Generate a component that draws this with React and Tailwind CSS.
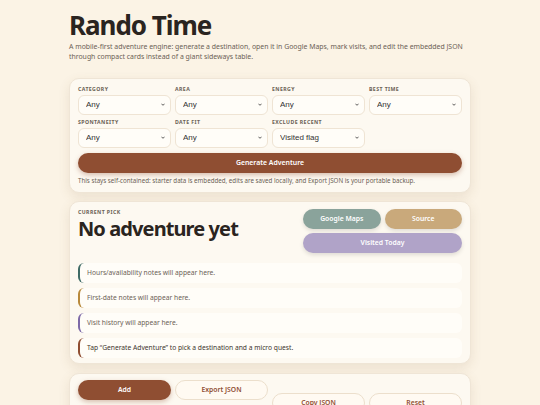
import React from "react";

const filters = [
  { label: "Category", value: "Any" },
  { label: "Area", value: "Any" },
  { label: "Energy", value: "Any" },
  { label: "Best Time", value: "Any" },
  { label: "Spontaneity", value: "Any" },
  { label: "Date Fit", value: "Any" },
  { label: "Exclude Recent", value: "Visited flag" },
];

const notes = [
  { text: "Hours/availability notes will appear here.", border: "border-[#3f6b66]", color: "text-[#6b6155]" },
  { text: "First-date notes will appear here.", border: "border-[#b8893c]", color: "text-[#6b6155]" },
  { text: "Visit history will appear here.", border: "border-[#7d6aa8]", color: "text-[#6b6155]" },
  { text: "Tap “Generate Adventure” to pick a destination and a micro quest.", border: "border-[#8f4e32]", color: "text-[#3d342d]" },
];

function Field({ label, value }) {
  return (
    <label className="flex flex-col">
      <span className="text-[5.2px] font-bold uppercase tracking-[0.08em] text-[#6b6155] leading-[6px] mb-[3px]">
        {label}
      </span>
      <div className="relative h-[20px]">
        <select
          defaultValue={value}
          className="block w-full h-[20px] appearance-none rounded-[6px] border border-[#efe4d4] bg-[#fffdf8] pl-[7px] pr-4 text-[8px] text-[#333] outline-none"
          style={{ fontFamily: '"Liberation Sans", Arial, sans-serif' }}
        >
          <option>{value}</option>
        </select>
        <svg
          className="absolute right-[6px] top-[8px] w-[4px] h-[3px] pointer-events-none"
          viewBox="0 0 10 6"
          fill="none"
          stroke="#333"
          strokeWidth="2"
        >
          <path d="M1 1l4 4 4-4" />
        </svg>
      </div>
    </label>
  );
}

export default function App() {
  return (
    <div
      className="min-h-screen bg-[#fbf3e5] text-[#2a2420]"
      style={{ fontFamily: '"Noto Sans", sans-serif' }}
    >
      <div className="w-[402px] mx-auto pt-[10px]">
        <h1 className="text-[26px] font-bold tracking-[-0.04em] leading-[30px] text-[#2a2420]">
          Rando Time
        </h1>
        <p className="text-[6.9px] leading-[10px] text-[#6b6155] mt-[2px]">
          A mobile-first adventure engine: generate a destination, open it in Google Maps, mark visits, and edit the embedded JSON
          through compact cards instead of a giant sideways table.
        </p>

        <section className="mt-[16px] rounded-[10px] border border-[#efe5d6] bg-[#fdf9f1] px-[8px] pt-[7px] pb-[7px] shadow-[0_4px_12px_rgba(120,90,50,0.12)]">
          <div className="grid grid-cols-4 gap-x-[4px] gap-y-[4px]">
            {filters.map((f) => (
              <Field key={f.label} label={f.label} value={f.value} />
            ))}
          </div>
          <button className="block mt-[5px] w-full h-[20px] rounded-full bg-[#8f4e32] text-white text-[6.9px] font-semibold shadow-[0_2px_5px_rgba(143,78,50,0.35)]">
            Generate Adventure
          </button>
          <p className="mt-[3px] text-[6.2px] leading-[9px] text-[#6b6155]">
            This stays self-contained: starter data is embedded, edits are saved locally, and Export JSON is your portable backup.
          </p>
        </section>

        <section className="mt-[8px] rounded-[10px] border border-[#efe5d6] bg-[#fdf9f1] px-[8px] pt-[7px] pb-[5px] shadow-[0_4px_12px_rgba(120,90,50,0.12)]">
          <div className="flex justify-between">
            <div>
              <div className="text-[5.2px] font-bold uppercase tracking-[0.08em] text-[#6b6155] leading-[6px]">
                Current Pick
              </div>
              <h2 className="mt-[2px] text-[20px] font-bold tracking-[-0.045em] leading-[23px] text-[#2a2420]">
                No adventure yet
              </h2>
            </div>
            <div className="w-[159px] grid grid-cols-2 gap-[4px]">
              <button className="h-[20px] rounded-full bg-[#8aa39b] text-white text-[6.8px] font-semibold shadow-[0_2px_4px_rgba(0,0,0,0.12)]">
                Google Maps
              </button>
              <button className="h-[20px] rounded-full bg-[#c9a97b] text-white text-[6.8px] font-semibold shadow-[0_2px_4px_rgba(0,0,0,0.12)]">
                Source
              </button>
              <button className="col-span-2 h-[20px] rounded-full bg-[#b0a3c8] text-white text-[6.8px] font-semibold shadow-[0_2px_4px_rgba(0,0,0,0.12)]">
                Visited Today
              </button>
            </div>
          </div>
          <div className="mt-[10px] flex flex-col gap-[5px]">
            {notes.map((n) => (
              <div
                key={n.text}
                className={`h-[20px] flex items-center rounded-[6px] border-l-2 ${n.border} bg-[#fffdf8] pl-[7px] text-[6.7px] ${n.color}`}
              >
                {n.text}
              </div>
            ))}
          </div>
        </section>

        <section className="mt-[9px] rounded-[10px] border border-[#efe5d6] bg-[#fdf9f1] px-[8px] pt-[6px] pb-[7px] shadow-[0_4px_12px_rgba(120,90,50,0.12)]">
          <div className="grid grid-cols-4 gap-[4px] items-start">
            <button className="h-[20px] rounded-full bg-[#8f4e32] text-white text-[6.8px] font-semibold shadow-[0_2px_5px_rgba(143,78,50,0.35)]">
              Add
            </button>
            <button className="h-[20px] rounded-full border border-[#ecdfcc] bg-[#fffaf2] text-[#8f4e32] text-[6.8px] font-semibold">
              Export JSON
            </button>
            <button className="mt-[13px] h-[20px] rounded-full border border-[#ecdfcc] bg-[#fffaf2] text-[#8f4e32] text-[6.8px] font-semibold">
              Copy JSON
            </button>
            <button className="mt-[13px] h-[20px] rounded-full border border-[#ecdfcc] bg-[#fffaf2] text-[#8f4e32] text-[6.8px] font-semibold">
              Reset
            </button>
          </div>
        </section>
      </div>
    </div>
  );
}
